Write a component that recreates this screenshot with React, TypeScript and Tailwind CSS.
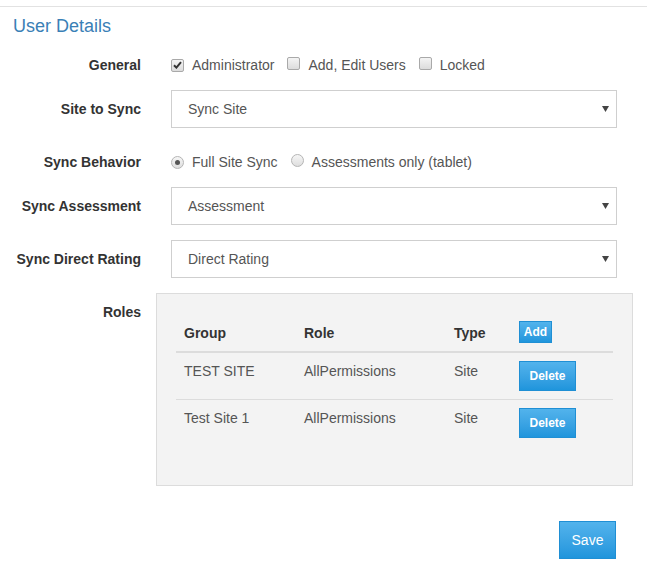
import React from 'react'

const Check = ({ checked }: { checked?: boolean }) => (
  <span className="relative inline-flex h-[13px] w-[13px] items-center justify-center rounded-[2px] border border-[#a9a9a9] bg-gradient-to-b from-[#f4f4f4] to-[#dcdcdc]">
    {checked && (
      <svg width="9" height="8" viewBox="0 0 9 8">
        <path d="M1 4.2 L3.4 6.6 L8 1.2" fill="none" stroke="#333" strokeWidth="2" />
      </svg>
    )}
  </span>
)

const Radio = ({ checked }: { checked?: boolean }) => (
  <span className="inline-flex h-[13px] w-[13px] items-center justify-center rounded-full border border-[#b5b5b5] bg-gradient-to-b from-[#f6f6f6] to-[#dedede]">
    {checked && <span className="h-[5px] w-[5px] rounded-full bg-[#555]" />}
  </span>
)

const Select = ({ value }: { value: string }) => (
  <div className="ml-[30px] flex h-[38px] w-[446px] items-center justify-between border border-[#cfcfcf] bg-white pl-[16px] pr-[7px] text-[14px] text-[#555]">
    <span>{value}</span>
    <svg width="7" height="6" viewBox="0 0 7 6">
      <path d="M0 0 H7 L3.5 6 Z" fill="#444" />
    </svg>
  </div>
)

const Label = ({ children }: { children: React.ReactNode }) => (
  <div className="w-[141px] shrink-0 text-right text-[14px] font-bold text-[#333]">{children}</div>
)

const btn =
  'border border-[#1f8fd4] bg-gradient-to-b from-[#52b3ec] to-[#1f95dc] text-white'

const roles = [
  { group: 'TEST SITE', role: 'AllPermissions', type: 'Site' },
  { group: 'Test Site 1', role: 'AllPermissions', type: 'Site' },
]

export default function App() {
  return (
    <div className="h-[581px] w-[647px] bg-white font-['Liberation_Sans',Arial,sans-serif] text-[14px] leading-[20px] text-[#333]">
      <div className="mt-[6px] border-t border-[#e2e2e2]">
        <h2 className="pl-[13px] pt-[9px] text-[18px] leading-[20px] text-[#3a80b6]">User Details</h2>

        <div className="mt-[19px] flex h-[20px] items-center">
          <Label>General</Label>
          <div className="ml-[30px] flex items-center text-[#555]">
            <Check checked />
            <span className="ml-[8px]">Administrator</span>
            <span className="ml-[13px]"><Check /></span>
            <span className="ml-[8px]">Add, Edit Users</span>
            <span className="ml-[13px]"><Check /></span>
            <span className="ml-[8px]">Locked</span>
          </div>
        </div>

        <div className="mt-[15px] flex items-center">
          <Label>Site to Sync</Label>
          <Select value="Sync Site" />
        </div>

        <div className="mt-[24px] flex h-[20px] items-center">
          <Label>Sync Behavior</Label>
          <div className="ml-[30px] flex items-center text-[#555]">
            <Radio checked />
            <span className="ml-[8px]">Full Site Sync</span>
            <span className="ml-[13px]"><Radio /></span>
            <span className="ml-[8px]">Assessments only (tablet)</span>
          </div>
        </div>

        <div className="mt-[15px] flex items-center">
          <Label>Sync Assessment</Label>
          <Select value="Assessment" />
        </div>

        <div className="mt-[15px] flex items-center">
          <Label>Sync Direct Rating</Label>
          <Select value="Direct Rating" />
        </div>

        <div className="mt-[15px] flex items-start">
          <div className="pt-[9px]">
            <Label>Roles</Label>
          </div>
          <div className="ml-[15px] h-[193px] w-[477px] border border-[#dcdcdc] bg-[#f3f3f3] px-[19px] pt-[20px]">
            <div className="flex h-[39px] items-center border-b-2 border-[#dcdcdc] font-bold text-[#333]">
              <div className="w-[120px] pl-[8px]">Group</div>
              <div className="w-[150px] pl-[8px]">Role</div>
              <div className="w-[65px] pl-[8px]">Type</div>
              <div className="pl-[8px]">
                <button className={`${btn} mb-[2px] h-[22px] w-[33px] text-[12px] font-bold leading-[20px]`}>Add</button>
              </div>
            </div>
            {roles.map((r, i) => (
              <div
                key={i}
                className={`flex py-[8px] text-[#555] ${i === 0 ? 'border-b border-[#dcdcdc]' : ''}`}
              >
                <div className="w-[120px] pl-[8px]">{r.group}</div>
                <div className="w-[150px] pl-[8px]">{r.role}</div>
                <div className="w-[65px] pl-[8px]">{r.type}</div>
                <div className="pl-[8px]">
                  <button className={`${btn} h-[30px] w-[57px] text-[12px] font-bold`}>Delete</button>
                </div>
              </div>
            ))}
          </div>
        </div>

        <div className="mt-[35px] flex justify-end pr-[31px]">
          <button className={`${btn} h-[38px] w-[57px] text-[14px]`}>Save</button>
        </div>
      </div>
    </div>
  )
}
